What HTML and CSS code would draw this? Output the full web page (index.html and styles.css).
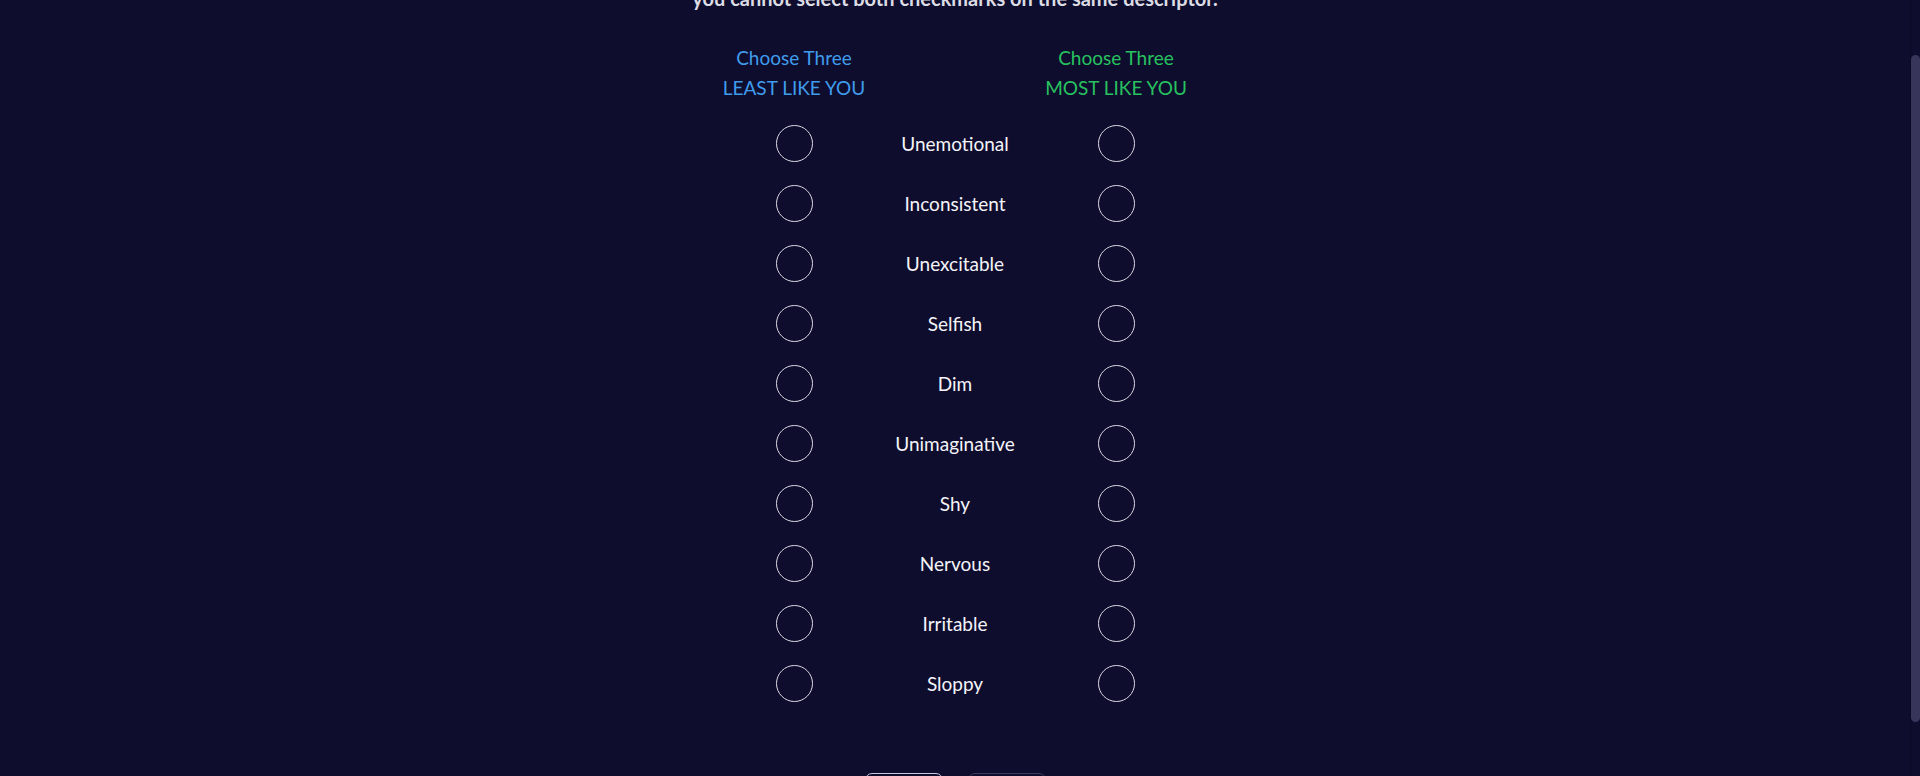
FILE: index.html
```html
<!DOCTYPE html>
<html lang="en">
<head>
<meta charset="utf-8">
<title>Descriptor selection</title>
<link rel="stylesheet" href="styles.css">
</head>
<body>
<div class="page">
  <main class="main">
    <p class="intro">you cannot select both checkmarks on the same descriptor.</p>
    <div class="grid">
      <div class="head least"><span>Choose Three</span><span>LEAST LIKE YOU</span></div>
      <div class="head"></div>
      <div class="head most"><span>Choose Three</span><span>MOST LIKE YOU</span></div>

      <div class="cell"><span class="radio"></span></div><div class="cell label">Unemotional</div><div class="cell"><span class="radio"></span></div>
      <div class="cell"><span class="radio"></span></div><div class="cell label">Inconsistent</div><div class="cell"><span class="radio"></span></div>
      <div class="cell"><span class="radio"></span></div><div class="cell label">Unexcitable</div><div class="cell"><span class="radio"></span></div>
      <div class="cell"><span class="radio"></span></div><div class="cell label">Selfish</div><div class="cell"><span class="radio"></span></div>
      <div class="cell"><span class="radio"></span></div><div class="cell label">Dim</div><div class="cell"><span class="radio"></span></div>
      <div class="cell"><span class="radio"></span></div><div class="cell label">Unimaginative</div><div class="cell"><span class="radio"></span></div>
      <div class="cell"><span class="radio"></span></div><div class="cell label">Shy</div><div class="cell"><span class="radio"></span></div>
      <div class="cell"><span class="radio"></span></div><div class="cell label">Nervous</div><div class="cell"><span class="radio"></span></div>
      <div class="cell"><span class="radio"></span></div><div class="cell label">Irritable</div><div class="cell"><span class="radio"></span></div>
      <div class="cell"><span class="radio"></span></div><div class="cell label">Sloppy</div><div class="cell"><span class="radio"></span></div>
    </div>
    <div class="actions">
      <button class="btn btn-back">Back</button>
      <button class="btn btn-next">Next</button>
    </div>
  </main>
  <aside class="scrollbar"><div class="thumb"></div></aside>
</div>
</body>
</html>
```

FILE: styles.css
```css
* { box-sizing: border-box; }
html, body {
  margin: 0;
  height: 776px;
  overflow: hidden;
  background: #0f0d2e;
}
body {
  font-family: "Lato", "Liberation Sans", sans-serif;
  color: #f2f2f6;
}
.page {
  display: flex;
  height: 776px;
}
.main {
  flex: 1;
  display: flex;
  flex-direction: column;
  align-items: center;
}
.intro {
  margin: -13px 0 0;
  font-size: 20px;
  line-height: 22px;
  font-weight: 700;
  color: #dcdce4;
}
.grid {
  margin-top: 34px;
  display: grid;
  grid-template-columns: 161px 161px 161px;
  grid-auto-rows: 60px;
  grid-template-rows: 70px;
}
.head {
  display: flex;
  flex-direction: column;
  align-items: center;
  font-size: 19px;
  line-height: 30px;
  white-space: nowrap;
}
.least { color: #3f9cec; }
.most { color: #27c25f; }
.cell {
  display: flex;
  align-items: center;
  justify-content: center;
}
.label {
  font-size: 19px;
  color: #f4f4f8;
  white-space: nowrap;
}
.radio {
  width: 37px;
  height: 37px;
  border: 1px solid #d9d9e3;
  border-radius: 50%;
}
.actions {
  margin-top: 60px;
  display: flex;
  gap: 25px;
}
.btn {
  width: 78px;
  height: 40px;
  border-radius: 7px;
  background: transparent;
  font-family: inherit;
  font-size: 16px;
  color: #f2f2f6;
}
.btn-back { border: 1px solid #c9c7dc; }
.btn-next { border: 1px solid #3d3a5e; }
.scrollbar {
  width: 10px;
  flex: none;
  padding-top: 55px;
  border-left: 1px solid #0b0a24;
}
.thumb {
  height: 667px;
  border-radius: 5px;
  background: #38355a;
}
```
